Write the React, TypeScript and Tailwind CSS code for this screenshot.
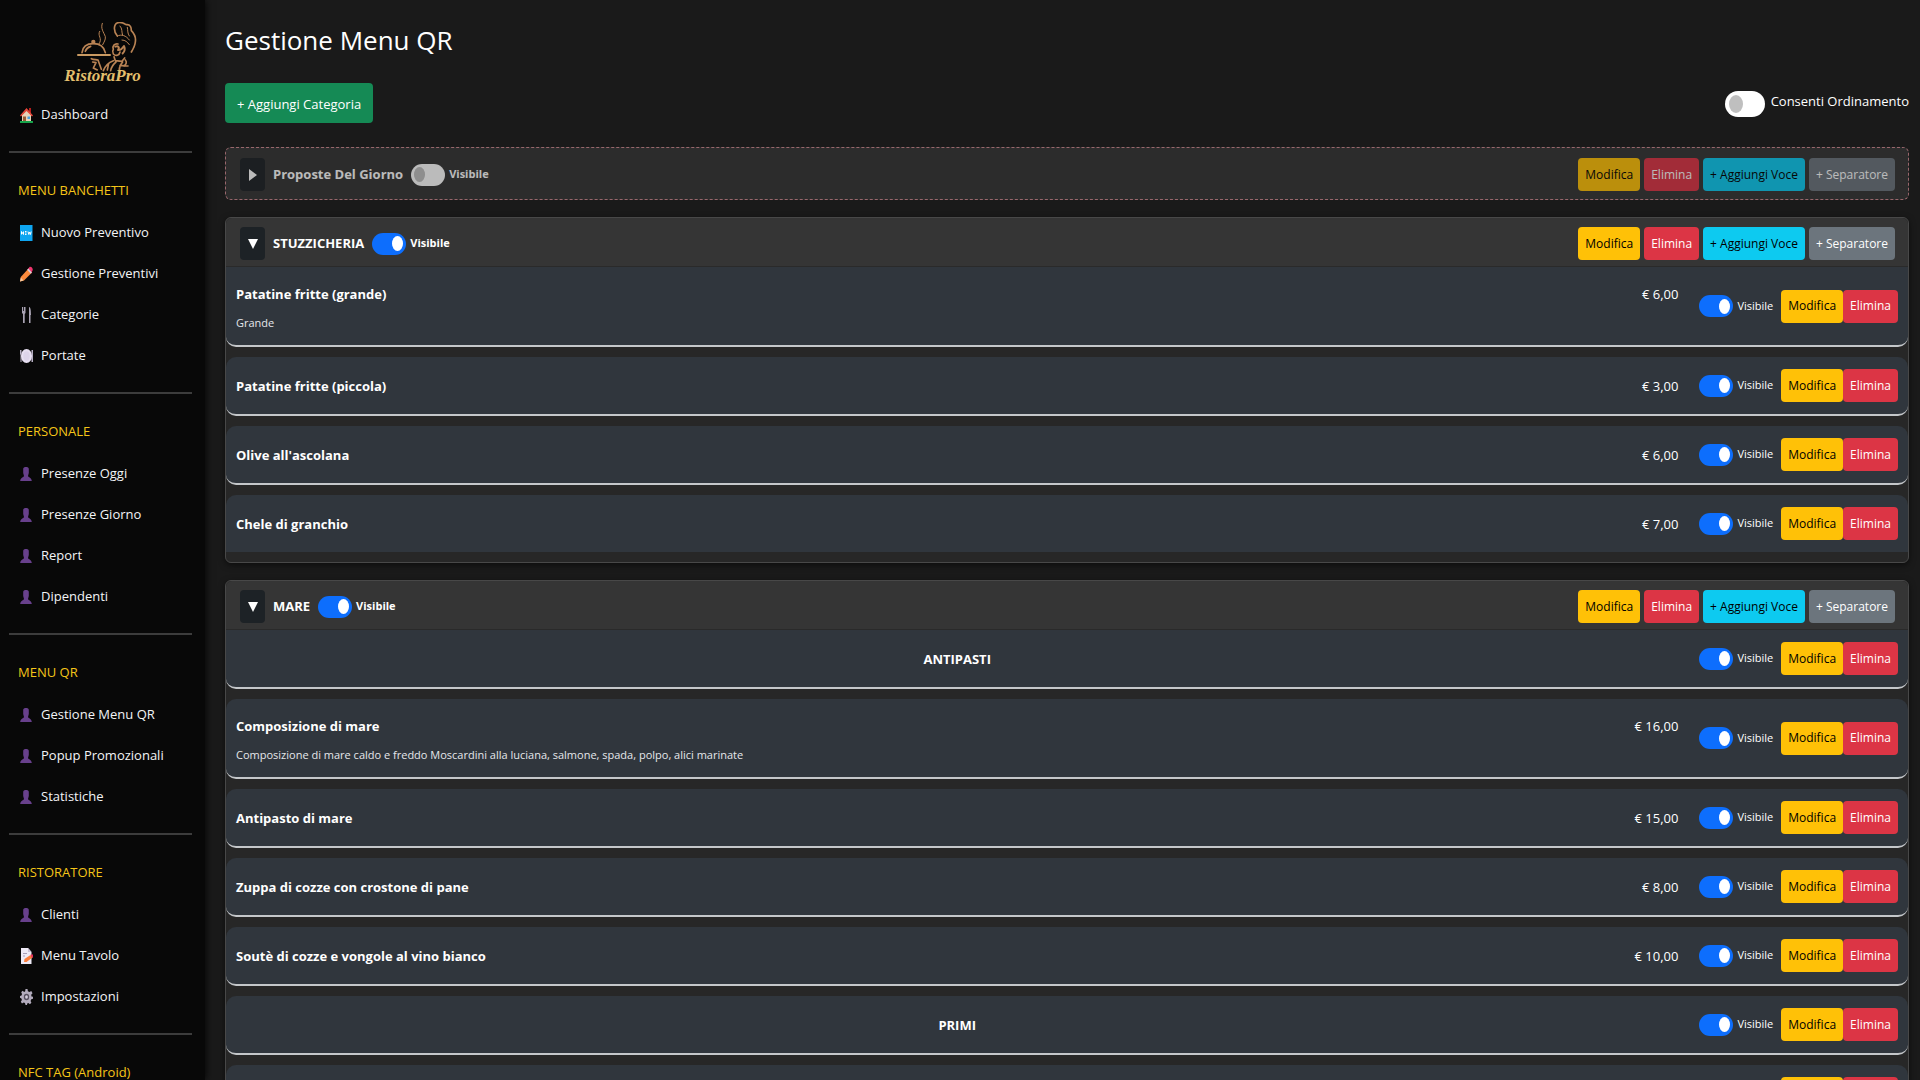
import { ReactNode, useState } from "react";

type IconName = "home" | "new" | "pencil" | "cutlery" | "plate" | "user" | "memo" | "gear";

const icons: Record<IconName, ReactNode> = {
  home: (
    <>
      <path d="M0 14h13v2H0z" fill="#16a34a" />
      <path d="M2 7.5L6.5 3 11 7.500V14H2z" fill="#e8d3b8" />
      <path d="M9 1h2v5H9z" fill="#b91c1c" />
      <path d="M0 8.500L6.500 1 13 8.500l-1 1L6.500 4 1 9.500z" fill="#e5483a" />
      <path d="M3 9.500h3V14H3z" fill="#9a5b34" />
      <path d="M7.500 9.500H10V12H7.500z" fill="#4aa3df" />
    </>
  ),
  new: (
    <>
      <path d="M0 0h12.500v16H0z" fill="#0ea5f0" />
      <path d="M1.500 9.500V6.500L3.500 9.500V6.500M5 6.500h1.500M5 8h1.500M5 9.500h1.500M8 6.500l.8 3 .8-2.500.8 2.500.8-3" stroke="#fff" strokeWidth="1" fill="none" />
    </>
  ),
  pencil: (
    <>
      <path d="M0 15.500L.8 11 8.500 2.500l3.500 4L4 14.500z" fill="#fb8b3c" />
      <path d="M8 3l1.500-2C11 0 13.500 2.500 12.500 4.500L11 7.500z" fill="#f0356e" />
      <path d="M7.200 3.800L8.300 2.600 11.800 6.600 10.800 7.700z" fill="#d5d0dc" />
      <path d="M0 15.500L.8 11.500 3.500 14.500z" fill="#f6c9a0" />
    </>
  ),
  cutlery: (
    <>
      <path d="M2 0h1v4h.8V0h1v4V0h.7v6L4.700 7v9H3V7L2 6z" fill="#a9a3b3" />
      <path d="M9 0c1.500 0 2 3 2 8h-.5v8H9z" fill="#a9a3b3" />
    </>
  ),
  plate: (
    <>
      <path d="M0 2h1.500v12H.500V7L0 6zM11.500 2H13v12h-1.500z" fill="#b5aec2" />
      <ellipse cx="6.500" cy="8" rx="5.500" ry="7" fill="#e8e0f2" />
      <ellipse cx="6.500" cy="8" rx="3.300" ry="4.700" fill="#ddd4ea" />
    </>
  ),
  user: (
    <path d="M3.200 3C3.200 1.500 4.500 1 6 1s2.800.5 2.800 2v4L8 10c.5 1.500 3.500 1.500 3.800 5H.200C.500 11.500 3.500 11.500 4 10l-.8-3z" fill="#68408c" />
  ),
  memo: (
    <>
      <path d="M1 0h7l3.500 4v12H1z" fill="#eee9f5" />
      <path d="M8 0v4h3.500z" fill="#c9c0d6" />
      <path d="M3 5.500h4M3 8h2" stroke="#a79db8" strokeWidth="1" />
      <path d="M4 14l.5-3L10.500 7l2 2.500L6.500 14z" fill="#fb7d3c" />
      <path d="M10.500 6.500L13 6.500 13.500 9l-1.500 1z" fill="#e8305e" />
    </>
  ),
  gear: (
    <>
      <path d="M5.500 0h2l.4 2.200 1.600.9L11.300 2l1.200 2.300-1.300 1.500.3 1.700 1.500.3v2l-1.700.5-.7 1.600.8 1.800-1.500 1.500-1.500-1.300-1.200.5L7 16H5.500L5 14l-1.300-.6L2 14.500.800 12.700l1.100-1.700-.5-1.500L0 8.800V6.900l1.500-.5.5-1.500L1.200 3.200 2.600 1.700l1.600 1.200 1-.6z" fill="#b3acbd" />
      <ellipse cx="6.500" cy="8" rx="2.700" ry="3.300" fill="#57505f" />
      <ellipse cx="6.500" cy="8" rx="1.400" ry="1.800" fill="#d4cddd" />
    </>
  ),
};

function Icon({ name }: { name: IconName }) {
  return (
    <svg viewBox="0 0 13 16" className="h-4 w-[13px] shrink-0" aria-hidden="true">
      {icons[name]}
    </svg>
  );
}

const sections: { title: string; links: [IconName, string][] }[] = [
  {
    title: "MENU BANCHETTI",
    links: [
      ["new", "Nuovo Preventivo"],
      ["pencil", "Gestione Preventivi"],
      ["cutlery", "Categorie"],
      ["plate", "Portate"],
    ],
  },
  {
    title: "PERSONALE",
    links: [
      ["user", "Presenze Oggi"],
      ["user", "Presenze Giorno"],
      ["user", "Report"],
      ["user", "Dipendenti"],
    ],
  },
  {
    title: "MENU QR",
    links: [
      ["user", "Gestione Menu QR"],
      ["user", "Popup Promozionali"],
      ["user", "Statistiche"],
    ],
  },
  {
    title: "RISTORATORE",
    links: [
      ["user", "Clienti"],
      ["memo", "Menu Tavolo"],
      ["gear", "Impostazioni"],
    ],
  },
  { title: "NFC TAG (Android)", links: [] },
];

function Logo() {
  return (
    <a href="#" className="flex h-[68px] flex-col items-center" aria-label="RistoraPro">
      <svg viewBox="25 30 225 150" className="h-[50px] w-[75px]" fill="none" stroke="#b98354" strokeWidth="5" strokeLinecap="round" strokeLinejoin="round" aria-hidden="true">
        <path d="M129 58c-8 14 10 20-2 38M137 34c-6 16 4 26 9 40 1 10-4 16-8 24" strokeWidth="3" />
        <circle cx="110" cy="90" r="4" fill="#b98354" />
        <path d="M76 122c2-18 16-27 34-27s32 9 36 27M86 118c3-9 9-13 16-15" />
        <path d="M64 129h96" stroke="#c99a62" strokeWidth="6" />
        <path d="M104 140c8 4 14 2 20 4l10 28M108 150l10 2-8 16 12 6" />
        <path d="M182 72c-12-14-12-36 2-40 10-3 18 2 24 6 14-2 16 10 16 18 8 8 14 22 12 34-1 12-6 20-12 30" />
        <path d="M190 42c8 8 4 18 8 28M212 46c2 10 0 18 6 26M182 72c12-6 26-2 36 12M196 84c10 0 16 6 22 14" strokeWidth="3" />
        <path d="M184 96c-10-2-18 6-14 16-4 6-2 10 0 14 8 8 18 4 20-6" />
        <path d="M176 104c8-4 14 2 8 10 8 2 14-6 18-12 4 8 2 18-4 22" strokeWidth="6" />
        <path d="M172 134l4 12 20 2 8-10M170 146c-16 6-24 14-30 30M178 150c-10 8-14 16-16 26M198 150c-8 8-10 16-10 24M206 144c6 6 2 14-4 18M156 154l-4 20M190 160l24 2" />
      </svg>
      <span className="-mt-1.5 font-['Liberation_Serif',serif] text-[17px] leading-5 font-bold text-[#e3bf6d] italic">RistoraPro</span>
    </a>
  );
}

function SideLink({ icon, children }: { icon: IconName; children: ReactNode }) {
  return (
    <li>
      <a href="#" className="flex h-[41px] items-center gap-2 pl-5 text-[13px] whitespace-nowrap text-gray-100">
        <Icon name={icon} />
        {children}
      </a>
    </li>
  );
}

function Sidebar() {
  return (
    <aside className="w-[205px] shrink-0 bg-[#080808] pt-[22px] shadow-[0_0_8px_#000]">
      <Logo />
      <nav>
        <ul className="pt-1 pb-4">
          <SideLink icon="home">Dashboard</SideLink>
        </ul>
        {sections.map((s) => (
          <section key={s.title} className="mr-[13px] pb-4">
            <hr className="ml-[9px] border-t-2 border-[#3c3c3c]" />
            <h2 className="mt-[18px] mb-0.5 flex h-[39px] items-center pl-[18px] text-[13px] whitespace-nowrap text-[#f5c518]">{s.title}</h2>
            <ul>
              {s.links.map(([icon, label]) => (
                <SideLink key={label} icon={icon}>
                  {label}
                </SideLink>
              ))}
            </ul>
          </section>
        ))}
      </nav>
    </aside>
  );
}

function Visibility({ on, bold }: { on: boolean; bold?: boolean }) {
  const [checked, setChecked] = useState(on);
  return (
    <label className={`flex items-center gap-1 text-[11px] ${bold ? "font-bold" : ""}`}>
      <input
        type="checkbox"
        role="switch"
        checked={checked}
        onChange={(e) => setChecked(e.target.checked)}
        className="flex h-[22px] w-[34px] appearance-none items-center rounded-full bg-white px-[3px] before:h-[15px] before:w-[11px] before:rounded-[50%] before:bg-[#bfbfbf] before:content-[''] checked:justify-end checked:bg-[#0d6efd] checked:before:bg-white"
      />
      Visibile
    </label>
  );
}

const tones = {
  yellow: "bg-[#ffc107] text-black",
  red: "bg-[#dc3545] text-white",
  cyan: "bg-[#0dcaf0] text-black",
  gray: "bg-[#6c757d] text-white",
};

function Button({ tone, children }: { tone: keyof typeof tones; children: ReactNode }) {
  return <button className={`h-[33px] rounded px-[7px] text-xs whitespace-nowrap ${tones[tone]}`}>{children}</button>;
}

function CategoryHeader({ title, open }: { title: string; open: boolean }) {
  return (
    <header className="flex items-center justify-between pr-[13px] pl-[14px]">
      <div className="flex items-center">
        <button className="mr-2 flex h-[33px] w-[25px] items-center justify-center rounded bg-[#1d2226]" aria-label={open ? "Chiudi" : "Apri"}>
          <svg viewBox="0 0 10 12" className="h-3 w-2.5" fill="#fff" aria-hidden="true">
            <path d={open ? "M0 1h10L5 11z" : "M1 0l8 6-8 6z"} />
          </svg>
        </button>
        <h2 className="mr-2 text-[13px] font-bold whitespace-nowrap">{title}</h2>
        <Visibility on={open} bold />
      </div>
      <div className="flex gap-1">
        <Button tone="yellow">Modifica</Button>
        <Button tone="red">Elimina</Button>
        <Button tone="cyan">+ Aggiungi Voce</Button>
        <Button tone="gray">+ Separatore</Button>
      </div>
    </header>
  );
}

type Item = { name: string; price?: string; note?: string };

function ItemRow({ name, price, note }: Item) {
  return (
    <li
      className={`flex items-center rounded-[10px] border-b-2 border-[#c4c7ca] bg-[#30363d] px-2.5 first:rounded-t-none last:rounded-b-none last:border-b-0 ${note ? "h-20" : "h-[59px] last:h-[57px]"}`}
    >
      <div className={`flex grow ${note ? "pt-[5px]" : ""}`}>
        <div className={`grow ${price ? "" : "text-center"}`}>
          <h3 className="text-[13px] leading-7 font-bold">{name}</h3>
          {note && <p className="mt-px text-[11px] leading-7 text-gray-200">{note}</p>}
        </div>
        {price && <span className="text-[13px] leading-7 whitespace-nowrap">{price}</span>}
      </div>
      <div className="ml-[21px] flex items-center">
        <Visibility on />
        <div className="ml-2 flex">
          <Button tone="yellow">Modifica</Button>
          <Button tone="red">Elimina</Button>
        </div>
      </div>
    </li>
  );
}

function Category({ title, items }: { title: string; items: Item[] }) {
  return (
    <section className="rounded-md border border-[#484848] bg-[#272727] pb-2.5 shadow-[0_2px_6px_#0008]">
      <div className="rounded-t-md border-b border-[#2a2a2a] bg-[#353535] pt-[9px] pb-1.5">
        <CategoryHeader title={title} open />
      </div>
      <ul className="flex flex-col gap-2.5">
        {items.map((item) => (
          <ItemRow key={item.name} {...item} />
        ))}
      </ul>
    </section>
  );
}

export default function App() {
  return (
    <div className="flex h-screen overflow-hidden bg-[#1a1a1a] font-['Open_Sans',sans-serif] text-white">
      <Sidebar />
      <main className="min-w-0 grow pt-5 pr-[11px] pl-5">
        <h1 className="text-[26px] leading-10">Gestione Menu QR</h1>
        <div className="mt-[23px] flex items-start justify-between">
          <button className="h-10 rounded bg-[#158a55] px-3 pt-1 text-[13px]">+ Aggiungi Categoria</button>
          <label className="mt-2 flex text-[13px] leading-5">
            <input
              type="checkbox"
              role="switch"
              className="mr-1.5 flex h-[26px] w-10 appearance-none items-center rounded-full bg-white px-1 before:h-[18px] before:w-[14px] before:rounded-[50%] before:bg-[#bfbfbf] before:content-[''] checked:justify-end checked:bg-[#0d6efd] checked:before:bg-white"
            />
            Consenti Ordinamento
          </label>
        </div>
        <div className="mt-6 flex flex-col gap-[17px]">
          <section className="rounded-md border border-dashed border-[#d08890] bg-[#353535] pt-2.5 pb-2 opacity-70">
            <CategoryHeader title="Proposte Del Giorno" open={false} />
          </section>
          <Category
            title="STUZZICHERIA"
            items={[
              { name: "Patatine fritte (grande)", price: "€ 6,00", note: "Grande" },
              { name: "Patatine fritte (piccola)", price: "€ 3,00" },
              { name: "Olive all'ascolana", price: "€ 6,00" },
              { name: "Chele di granchio", price: "€ 7,00" },
            ]}
          />
          <Category
            title="MARE"
            items={[
              { name: "ANTIPASTI" },
              {
                name: "Composizione di mare",
                price: "€ 16,00",
                note: "Composizione di mare caldo e freddo Moscardini alla luciana, salmone, spada, polpo, alici marinate",
              },
              { name: "Antipasto di mare", price: "€ 15,00" },
              { name: "Zuppa di cozze con crostone di pane", price: "€ 8,00" },
              { name: "Soutè di cozze e vongole al vino bianco", price: "€ 10,00" },
              { name: "PRIMI" },
              { name: "", price: "" },
            ]}
          />
        </div>
      </main>
    </div>
  );
}
